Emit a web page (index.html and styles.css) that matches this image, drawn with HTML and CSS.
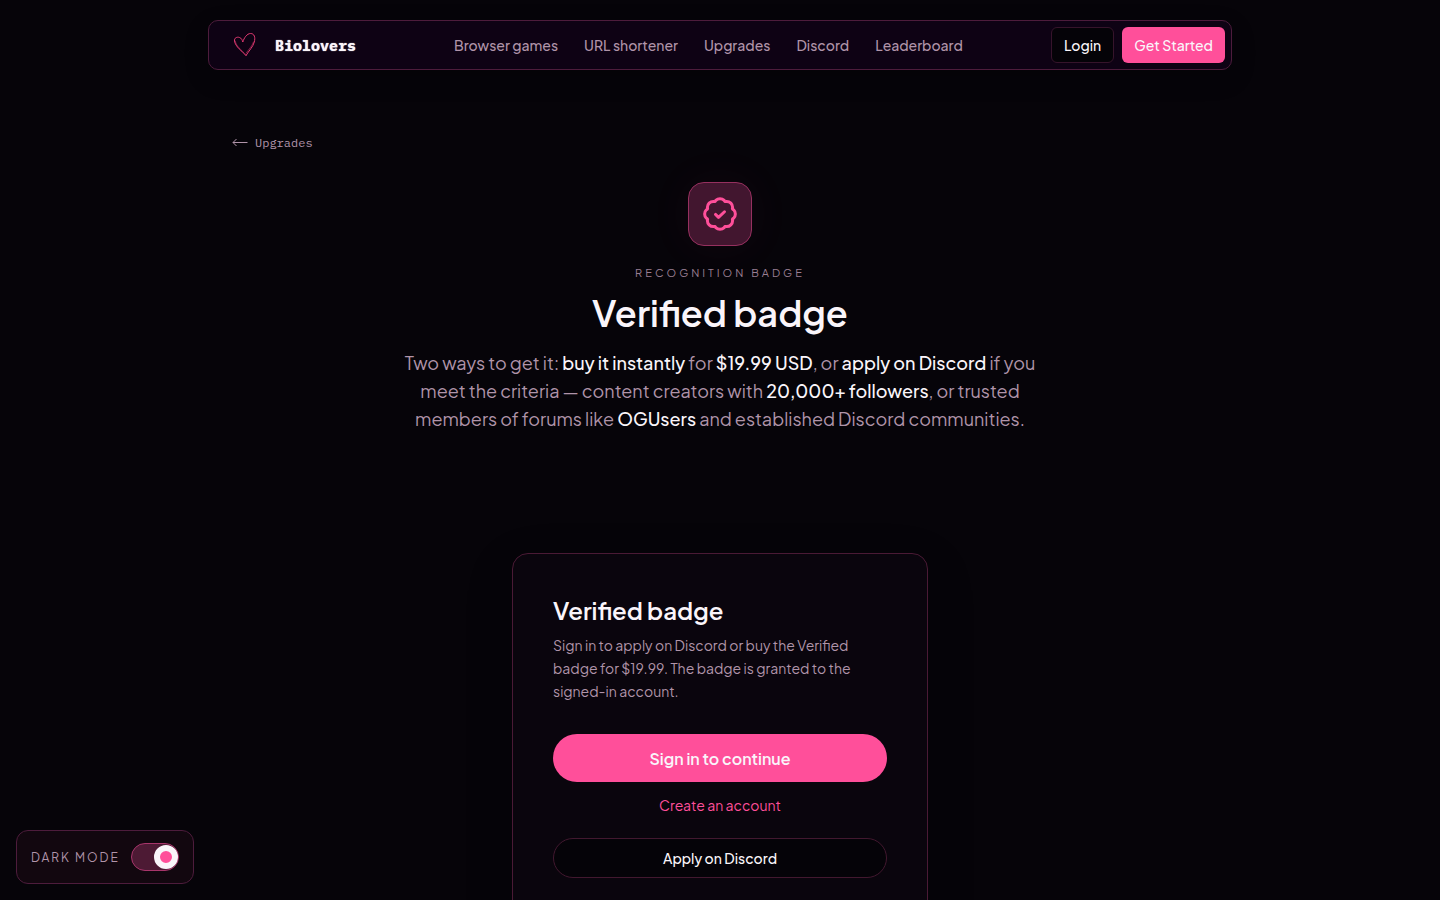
FILE: index.html
```html
<!DOCTYPE html>
<html lang="en">

<head>
  <meta charset="UTF-8">
  <meta name="viewport" content="width=device-width, initial-scale=1.0">
  <title>Verified badge - Biolovers</title>
  <link rel="stylesheet" href="styles.css">
</head>

<body>

  <header class="navbar">
    <a href="#" class="brand">
      <svg class="brand-heart" viewBox="0 0 24 26" fill="none" stroke="#e23a72" stroke-width="1" stroke-linecap="round" stroke-linejoin="round">
        <path d="M13 23.500C9 19 2.500 15 1.500 9C1 6 4 4.500 6.500 5.500C8.500 6.200 9.300 8 9.800 10C11 6 14 1.500 17.500 1.500C21.500 1.500 22.500 5.500 21.300 10C20 15 16 18.500 13 23.500" />
        <path d="M12.300 22.200C8.500 18 3.300 14.500 2.200 9M20.500 10C19 14.500 15.500 17.500 13.200 21" stroke-width="0.500" />
      </svg>
      <span class="brand-name">Biolovers</span>
    </a>
    <nav class="nav-links">
      <a href="#">Browser games</a>
      <a href="#">URL shortener</a>
      <a href="#">Upgrades</a>
      <a href="#">Discord</a>
      <a href="#">Leaderboard</a>
    </nav>
    <div class="nav-buttons">
      <button type="button" class="btn-small">Login</button>
      <button type="button" class="btn-small btn-pink">Get Started</button>
    </div>
  </header>

  <main class="container">
    <a href="#" class="back-link">
      <svg width="16" height="10" viewBox="0 0 16 10" fill="none" stroke="currentColor" stroke-width="1">
        <path d="M15.500 5.500H1M4.500 2L1 5.500L4.500 9" />
      </svg>
      <span>Upgrades</span>
    </a>

    <section class="hero">
      <div class="hero-icon">
        <svg viewBox="0 0 24 24" fill="none" stroke="currentColor" stroke-width="2" stroke-linecap="round" stroke-linejoin="round">
          <path d="M9 12.300l2 1.900l4-3.700" />
          <path d="M9.200 2.900A4 4 0 0 1 14.800 2.900Q15.300 4.100 16.450 3.600A4 4 0 0 1 20.400 7.550Q19.900 8.700 21.100 9.200A4 4 0 0 1 21.100 14.800Q19.900 15.300 20.400 16.450A4 4 0 0 1 16.450 20.400Q15.300 19.900 14.800 21.100A4 4 0 0 1 9.200 21.100Q8.700 19.900 7.550 20.400A4 4 0 0 1 3.600 16.450Q4.100 15.300 2.900 14.800A4 4 0 0 1 2.900 9.200Q4.100 8.700 3.600 7.550A4 4 0 0 1 7.550 3.600Q8.700 4.100 9.200 2.900Z" />
        </svg>
      </div>
      <p class="hero-label">Recognition badge</p>
      <h1>Verified badge</h1>
      <p class="hero-text">
        Two ways to get it: <strong>buy it instantly</strong> for <strong>$19.99 USD</strong>, or <strong>apply on Discord</strong> if you
        meet the criteria — content creators with <strong>20,000+ followers</strong>, or trusted
        members of forums like <strong>OGUsers</strong> and established Discord communities.
      </p>
    </section>

    <section class="card">
      <h2>Verified badge</h2>
      <p class="card-text">
        Sign in to apply on Discord or buy the Verified
        badge for $19.99. The badge is granted to the
        signed-in account.
      </p>
      <button type="button" class="btn-signin">Sign in to continue</button>
      <a href="#" class="create-link">Create an account</a>
      <button type="button" class="btn-discord">Apply on Discord</button>
    </section>
  </main>

  <label class="dark-mode" for="dark-mode">
    <span>Dark mode</span>
    <input type="checkbox" id="dark-mode" class="switch" checked>
  </label>

</body>

</html>
```
FILE: styles.css
```css
*,
*::before {
  margin: 0;
  padding: 0;
  box-sizing: border-box;
}

body {
  overflow: hidden;
  height: 100vh;
  padding: 20px 16px 0;
  background: #060409;
  color: #faf5fa;
  font-family: "Plus Jakarta Sans", Inter, sans-serif;
  font-size: 14px;
}

a {
  color: inherit;
  text-decoration: none;
}

button {
  color: inherit;
  font-family: inherit;
  cursor: pointer;
}

/* navbar */
.navbar {
  display: flex;
  align-items: center;
  justify-content: space-between;
  max-width: 1024px;
  height: 50px;
  margin: 0 auto;
  padding: 0 6px 0 24px;
  background: #0e0214;
  border: 1px solid #4d1c3c;
  border-radius: 10px;
  box-shadow: 0 8px 24px rgba(0, 0, 0, 0.2);
}

.brand {
  display: flex;
  align-items: center;
  gap: 18px;
  padding-right: 10px;
}

.brand-heart {
  width: 24px;
  height: 26px;
}

.brand-name {
  font-family: "IBM Plex Mono", "Liberation Mono", monospace;
  font-size: 15px;
  font-weight: 700;
  text-shadow: 0 0 1px #faf5fa;
}

.nav-links {
  display: flex;
  gap: 26px;
  color: #b094a9;
  font-weight: 500;
}

.nav-buttons {
  display: flex;
  gap: 8px;
}

.btn-small {
  height: 36px;
  padding: 0 12px;
  background: #050308;
  border: 1px solid #36142b;
  border-radius: 6px;
  font-size: 14px;
  font-weight: 500;
}

.btn-pink {
  background: #ff4f9a;
  border: 0;
}

.container {
  max-width: 1024px;
  margin: 0 auto;
  padding: 64px 24px 0;
}

.back-link {
  display: flex;
  align-items: center;
  gap: 7px;
  width: fit-content;
  height: 16px;
  color: #b094a9;
  font-family: "IBM Plex Mono", "Liberation Mono", monospace;
  font-size: 12px;
}

/* hero */
.hero {
  display: flex;
  flex-direction: column;
  align-items: center;
  margin-top: 32px;
  text-align: center;
}

.hero-icon {
  display: flex;
  align-items: center;
  justify-content: center;
  width: 64px;
  height: 64px;
  color: #ff4f9a;
  background: #42162f;
  border: 1px solid #96305f;
  border-radius: 16px;
  box-shadow: 0 0 48px rgba(255, 79, 154, 0.05);
}

.hero-icon svg {
  width: 36px;
  height: 36px;
}

.hero-label {
  margin-top: 19px;
  color: #9a7f93;
  font-size: 11px;
  line-height: 16px;
  letter-spacing: 3px;
  text-transform: uppercase;
}

.hero h1 {
  margin-top: 9px;
  font-size: 36px;
  font-weight: 600;
  line-height: 46px;
}

.hero-text {
  max-width: 640px;
  margin-top: 13px;
  color: #b094a9;
  font-size: 18px;
  line-height: 28px;
}

.hero-text strong {
  color: #faf5fa;
  font-weight: 500;
}

/* sign in card */
.card {
  display: flex;
  flex-direction: column;
  max-width: 416px;
  margin: 120px auto 0;
  padding: 40px 40px 48px;
  background: #0a050d;
  border: 1px solid #4a1a35;
  border-radius: 16px;
  box-shadow: 0 16px 48px rgba(0, 0, 0, 0.2);
}

.card h2 {
  font-size: 24px;
  font-weight: 600;
  line-height: 32px;
}

.card-text {
  max-width: 320px;
  margin-top: 8px;
  color: #b094a9;
  line-height: 23px;
}

.btn-signin {
  height: 48px;
  margin-top: 31px;
  background: #ff4f9a;
  border: 0;
  border-radius: 24px;
  font-size: 16px;
  font-weight: 600;
}

.create-link {
  margin: 12px auto 0;
  color: #ff4f9a;
  line-height: 22px;
}

.btn-discord {
  height: 40px;
  margin-top: 22px;
  background: #050308;
  border: 1px solid #42182f;
  border-radius: 20px;
  font-size: 14px;
  font-weight: 500;
}

/* dark mode switch, stays in the corner */
.dark-mode {
  position: fixed;
  left: 16px;
  bottom: 16px;
  display: flex;
  align-items: center;
  gap: 11px;
  height: 54px;
  padding: 0 14px;
  color: #b094a9;
  background: #12070f;
  border: 1px solid #4d1c3c;
  border-radius: 12px;
  font-size: 12px;
  letter-spacing: 2px;
  text-transform: uppercase;
  cursor: pointer;
}

.switch {
  appearance: none;
  display: flex;
  align-items: center;
  width: 48px;
  height: 28px;
  background: #4d1a34;
  border: 1px solid #a8356b;
  border-radius: 14px;
  cursor: pointer;
}

.switch::before {
  content: "";
  width: 24px;
  height: 24px;
  border: 6px solid #faf5fa;
  border-radius: 50%;
  background: #ff4f9a;
}

.switch:checked::before {
  margin-left: auto;
}
```
